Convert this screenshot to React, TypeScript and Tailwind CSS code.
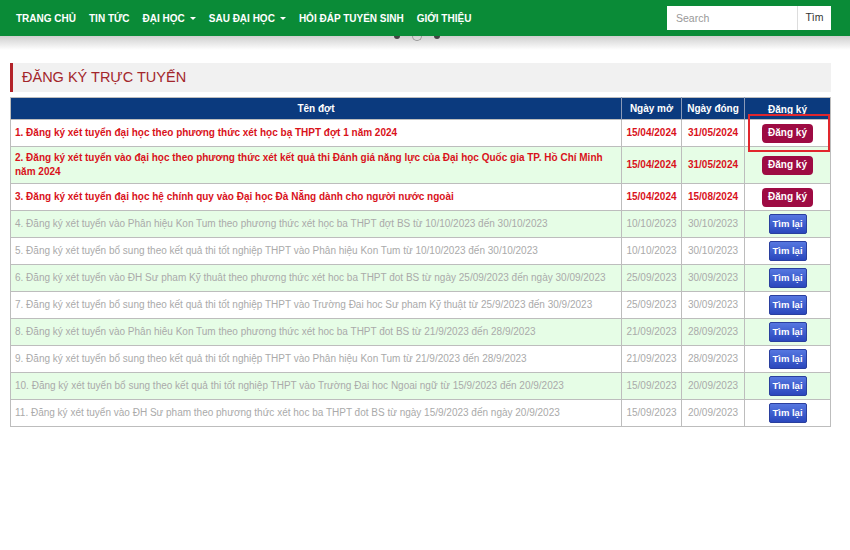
import React from "react";

type Row = {
  title: React.ReactNode;
  open: string;
  close: string;
  active: boolean;
};

const rows: Row[] = [
  {
    title: "1. Đăng ký xét tuyển đại học theo phương thức xét học bạ THPT đợt 1 năm 2024",
    open: "15/04/2024",
    close: "31/05/2024",
    active: true,
  },
  {
    title: (
      <>
        2. Đăng ký xét tuyển vào đại học theo phương thức xét kết quả thi Đánh giá năng lực của Đại học Quốc gia TP. Hồ Chí Minh
        <br />
        năm 2024
      </>
    ),
    open: "15/04/2024",
    close: "31/05/2024",
    active: true,
  },
  {
    title: "3. Đăng ký xét tuyển đại học hệ chính quy vào Đại học Đà Nẵng dành cho người nước ngoài",
    open: "15/04/2024",
    close: "15/08/2024",
    active: true,
  },
  {
    title: "4. Đăng ký xét tuyển vào Phân hiệu Kon Tum theo phương thức xét học ba THPT đợt BS từ 10/10/2023 đến 30/10/2023",
    open: "10/10/2023",
    close: "30/10/2023",
    active: false,
  },
  {
    title: "5. Đăng ký xét tuyển bổ sung theo kết quả thi tốt nghiệp THPT vào Phân hiệu Kon Tum từ 10/10/2023 đến 30/10/2023",
    open: "10/10/2023",
    close: "30/10/2023",
    active: false,
  },
  {
    title: "6. Đăng ký xét tuyển vào ĐH Sư pham Kỹ thuât theo phương thức xét hoc ba THPT đot BS từ ngày 25/09/2023 đến ngày 30/09/2023",
    open: "25/09/2023",
    close: "30/09/2023",
    active: false,
  },
  {
    title: "7. Đăng ký xét tuyển bổ sung theo kết quả thi tốt nghiệp THPT vào Trường Đai hoc Sư pham Kỹ thuật từ 25/9/2023 đến 30/9/2023",
    open: "25/09/2023",
    close: "30/09/2023",
    active: false,
  },
  {
    title: "8. Đăng ký xét tuyển vào Phân hiêu Kon Tum theo phương thức xét hoc ba THPT đot BS từ 21/9/2023 đến 28/9/2023",
    open: "21/09/2023",
    close: "28/09/2023",
    active: false,
  },
  {
    title: "9. Đăng ký xét tuyển bổ sung theo kết quả thi tốt nghiệp THPT vào Phân hiệu Kon Tum từ 21/9/2023 đến 28/9/2023",
    open: "21/09/2023",
    close: "28/09/2023",
    active: false,
  },
  {
    title: "10. Đăng ký xét tuyển bổ sung theo kết quả thi tốt nghiệp THPT vào Trường Đai hoc Ngoai ngữ từ 15/9/2023 đến 20/9/2023",
    open: "15/09/2023",
    close: "20/09/2023",
    active: false,
  },
  {
    title: "11. Đăng ký xét tuyển vào ĐH Sư pham theo phương thức xét hoc ba THPT đot BS từ ngày 15/9/2023 đến ngày 20/9/2023",
    open: "15/09/2023",
    close: "20/09/2023",
    active: false,
  },
];

const Caret = () => (
  <span className="ml-[5px] inline-block border-x-[3px] border-t-[3px] border-x-transparent border-t-white align-middle"></span>
);

const App: React.FC<{}> = () => {
  const navItems = ["TRANG CHỦ", "TIN TỨC", "ĐẠI HỌC", "SAU ĐẠI HỌC", "HỎI ĐÁP TUYỂN SINH", "GIỚI THIỆU"];
  return (
    <div className="w-[850px] h-[550px] bg-white overflow-hidden font-['Liberation_Sans',Arial,sans-serif]">
      {/* navbar */}
      <div className="h-[36px] bg-[#0a8b37] flex items-center px-[16px]">
        <div className="flex gap-[13px] text-white text-[10px] font-bold">
          {navItems.map((item) => (
            <span key={item} className="flex items-center">
              {item}
              {(item === "ĐẠI HỌC" || item === "SAU ĐẠI HỌC") && <Caret />}
            </span>
          ))}
        </div>
        <div className="ml-auto mr-[3px] flex h-[24px]">
          <input
            className="w-[130px] h-[24px] bg-white px-[9px] text-[10.5px] text-[#555] placeholder:text-[#999] outline-none"
            placeholder="Search"
          />
          <button className="w-[34px] h-[24px] bg-white border-l border-[#ddd] text-[10.5px] text-[#333]">Tìm</button>
        </div>
      </div>
      <div className="relative h-[14px] bg-gradient-to-b from-[#cfcfcf] to-white">
        <div className="absolute left-[394px] top-0 flex items-start gap-[12px]">
          <span className="block w-[6px] h-[3px] rounded-b-full bg-[#444]"></span>
          <span className="block w-[10px] h-[5px] rounded-b-full border border-t-0 border-[#999]"></span>
          <span className="block w-[6px] h-[3px] rounded-b-full bg-[#444]"></span>
        </div>
      </div>

      <div className="px-[10px] pt-[13px] w-[841px]">
        {/* title */}
        <div className="h-[29px] bg-[#f1f1f1] border-l-[3px] border-[#b3232a] flex items-center pl-[9px]">
          <h1 className="text-[14.5px] text-[#a3262b] leading-none">ĐĂNG KÝ TRỰC TUYẾN</h1>
        </div>

        <div className="relative mt-[5px]">
          <table className="w-full table-fixed border-collapse border border-[#bdbdbd] text-[10px] leading-[14px]">
            <thead>
              <tr className="h-[22px] bg-[#0b3a7e] text-white font-bold">
                <th className="font-bold">Tên đợt</th>
                <th className="w-[60px] font-bold border-l border-[#8a9ab8]">Ngày mở</th>
                <th className="w-[63px] font-bold border-l border-[#8a9ab8]">Ngày đóng</th>
                <th className="w-[86px] font-bold border-l border-[#8a9ab8] pt-[3px]">Đăng ký</th>
              </tr>
            </thead>
            <tbody>
              {rows.map((r, i) => (
                <tr
                  key={i}
                  className={
                    (i % 2 === 1 ? "bg-[#e6fde6] " : "bg-white ") +
                    "border-t border-[#bdbdbd] " +
                    (r.active ? "text-[#d9121b] font-bold" : "text-[#aaaaaa]")
                  }
                >
                  <td className={"px-[4px] " + (i === 1 ? "py-[4px]" : "h-[27px]")}>{r.title}</td>
                  <td className="text-center border-l border-[#bdbdbd]">{r.open}</td>
                  <td className="text-center border-l border-[#bdbdbd]">{r.close}</td>
                  <td className="text-center border-l border-[#bdbdbd]">
                    {r.active ? (
                      <button className="w-[51px] h-[19px] rounded-[4px] bg-[#9e0b43] text-white text-[10px] font-bold">
                        Đăng ký
                      </button>
                    ) : (
                      <button className="w-[38px] h-[20px] rounded-[2px] border border-[#2a3f9e] bg-gradient-to-b from-[#5677e0] to-[#2b47bd] text-white text-[9.5px] font-bold">
                        Tìm lại
                      </button>
                    )}
                  </td>
                </tr>
              ))}
            </tbody>
          </table>
          {/* highlight annotation */}
          <div className="absolute left-[738px] top-[17px] w-[82px] h-[38px] border-2 border-[#e1262d]"></div>
        </div>
      </div>
    </div>
  );
};

export default App;
